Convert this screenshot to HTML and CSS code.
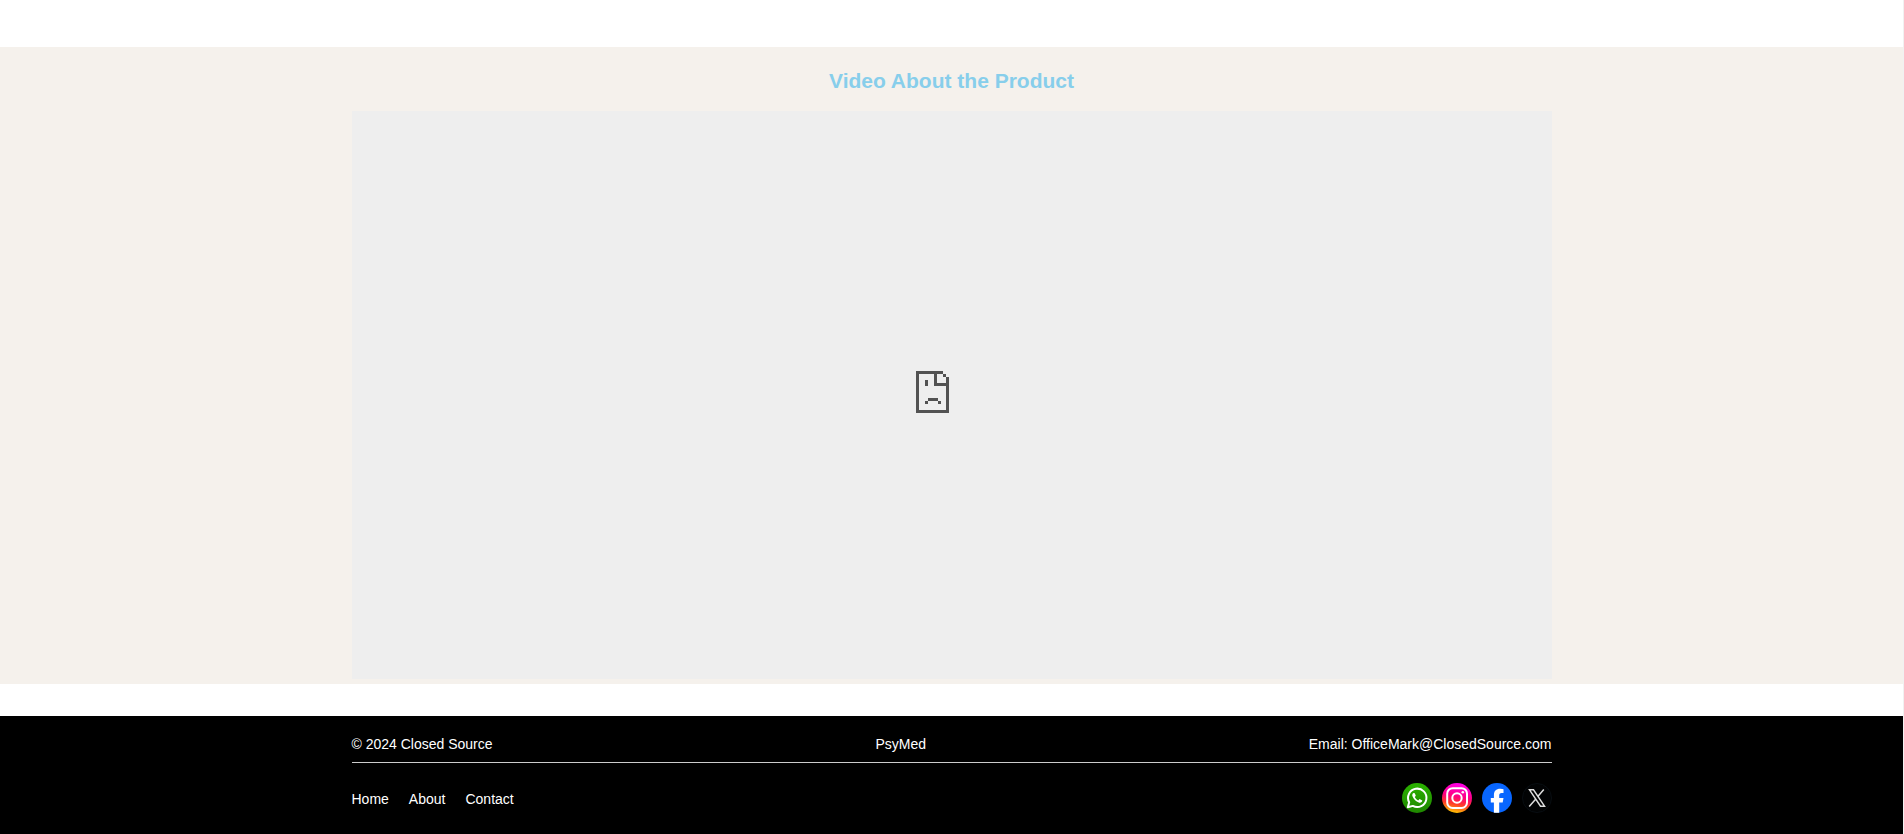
FILE: index.html
```html
<!DOCTYPE html>
<html lang="en">
<head>
<meta charset="utf-8">
<meta name="viewport" content="width=device-width, initial-scale=1">
<title>PsyMed</title>
<link rel="stylesheet" href="styles.css">
</head>
<body>
<main>
  <section class="video">
    <h2 class="video-title">Video About the Product</h2>
    <div class="container video-frame">
      <svg class="sad-page" viewBox="0 0 33 42" role="img" aria-label="Video unavailable" shape-rendering="crispEdges">
        <path fill="#525252" d="M0 0H27V3H30V6H33V42H0ZM3 3V39H30V15H18V3ZM21 3V12H30V6H27V3ZM9 9H12V15H9ZM12 27H22V30H12ZM9 30H12V33H9ZM22 30H25V33H22Z" fill-rule="evenodd"/>
      </svg>
    </div>
  </section>
</main>
<footer class="footer">
  <div class="container">
    <div class="footer-info">
      <span>© 2024 Closed Source</span>
      <span>PsyMed</span>
      <span>Email: OfficeMark@ClosedSource.com</span>
    </div>
    <div class="footer-bottom">
      <nav class="links">
        <a href="#home">Home</a>
        <a href="#about">About</a>
        <a href="#contact">Contact</a>
      </nav>
      <div class="social">
        <a href="#whatsapp" aria-label="WhatsApp">
          <svg viewBox="0 0 30 30"><defs><linearGradient id="wa" x1="0" y1="0" x2="0" y2="1"><stop offset="0" stop-color="#2bb200"/><stop offset="1" stop-color="#1f8700"/></linearGradient></defs>
            <circle cx="15" cy="15" r="15" fill="url(#wa)"/>
            <path d="M5.800 24.300L7.200 19.300A9.200 9.200 0 1 1 10.800 22.900Z" fill="none" stroke="#fff" stroke-width="2" stroke-linejoin="round"/>
            <path d="M11.600 10c-1.300.5-1.700 2-1 3.600 1.200 2.800 3.300 4.900 6.200 5.900 1.800.6 3.300-.3 3.500-2l-2.700-1.500-1.400 1.400c-1.600-.7-2.700-1.800-3.400-3.300l1-1.300-1-2.600z" fill="#fff"/>
          </svg>
        </a>
        <a href="#instagram" aria-label="Instagram">
          <svg viewBox="0 0 30 30"><defs><linearGradient id="ig" x1=".6" y1="0" x2=".4" y2="1"><stop offset="0" stop-color="#f0e"/><stop offset=".45" stop-color="#ff0080"/><stop offset=".7" stop-color="#ff3a28"/><stop offset="1" stop-color="#ffc800"/></linearGradient></defs>
            <circle cx="15" cy="15" r="15" fill="url(#ig)"/>
            <rect x="5.200" y="5.200" width="19.800" height="19.800" rx="5.500" fill="none" stroke="#fff" stroke-width="2"/>
            <circle cx="15" cy="15" r="4.700" fill="none" stroke="#fff" stroke-width="2"/>
            <circle cx="20.800" cy="9.300" r="1.300" fill="#fff"/>
          </svg>
        </a>
        <a href="#facebook" aria-label="Facebook">
          <svg viewBox="0 0 30 30"><circle cx="15" cy="15" r="15" fill="#0866ff"/>
            <path d="M11.900 29.700V19.500H8.800V15H11.900V12.500C11.900 8 14 5.800 18.300 5.800 19.600 5.800 20.700 6 21.500 6.200V10H19.600C17.800 10 17.200 10.900 17.200 12.500V15H21.500L20.700 19.500H17.200V29.800Z" fill="#fff"/>
          </svg>
        </a>
        <a href="#x" aria-label="X">
          <svg viewBox="0 0 30 30"><circle cx="15" cy="15" r="14.500" fill="#020304" stroke="#080d12"/>
            <path d="M7.500 6.800H11.500L22.500 23.200H18.500ZM21.800 6.500L15.800 13.400M13.600 16.200L7.200 23.500" fill="none" stroke="#ddd" stroke-width="1.500"/>
          </svg>
        </a>
      </div>
    </div>
  </div>
</footer>
</body>
</html>
```
FILE: styles.css
```css
* {
  box-sizing: border-box;
}

body {
  margin: 0;
  border-right: 1px solid #f1f1f1;
  background: #fff;
  font-family: "Liberation Sans", Arial, sans-serif;
  font-size: 14px;
  line-height: 16px;
}

main {
  padding: 47px 0 32px;
}

.container {
  width: 100%;
  max-width: 1200px;
  margin: 0 auto;
}

.video {
  padding: 22px 0 5px;
  background: #f5f1ec;
}

.video-title {
  margin: 0 0 18px;
  color: #87ceeb;
  font-size: 21px;
  line-height: 24px;
  text-align: center;
}

.video-frame {
  display: flex;
  align-items: center;
  justify-content: center;
  height: 568px;
  padding: 0 38px 6px 0;
  background: #eee;
}

.sad-page {
  width: 33px;
  height: 42px;
}

.footer {
  padding: 20px 0;
  background: #000;
  color: #fff;
}

.footer-info {
  display: flex;
  justify-content: space-between;
  padding-bottom: 10px;
  border-bottom: 1px solid #ccc;
}

.footer-bottom {
  display: flex;
  align-items: flex-end;
  justify-content: space-between;
  padding-top: 20px;
}

.links {
  display: flex;
  gap: 20px;
  padding-bottom: 7px;
}

.links a {
  color: #fff;
  text-decoration: none;
}

.social {
  display: flex;
  gap: 10px;
  padding-bottom: 1px;
}

.social svg {
  display: block;
  width: 30px;
  height: 30px;
}
```
